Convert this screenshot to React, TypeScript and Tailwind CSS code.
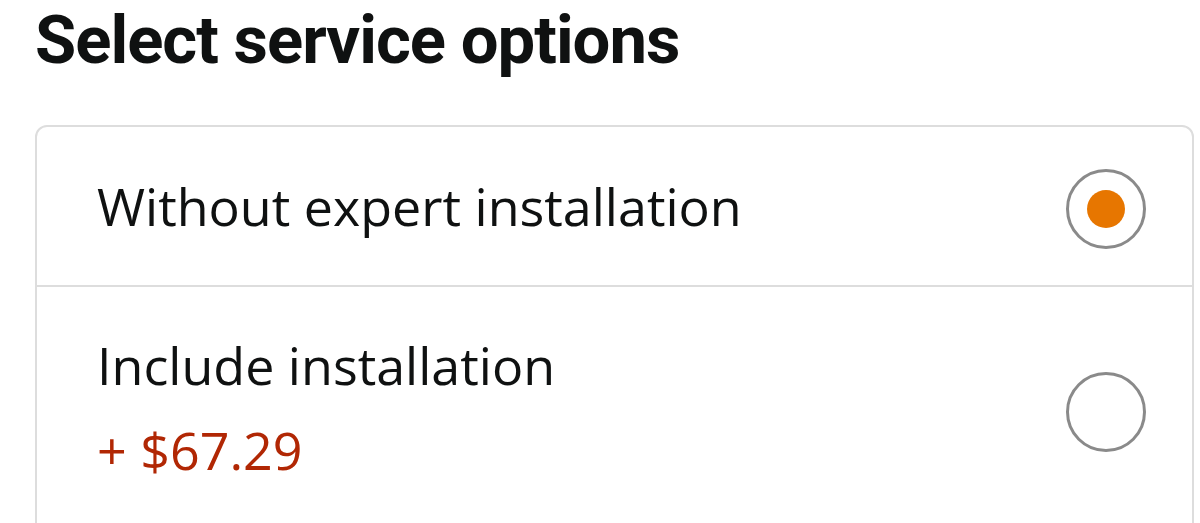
import React, { useState } from 'react';

const options = [
  { id: 'none', label: 'Without expert installation' },
  { id: 'install', label: 'Include installation', price: '+ $67.29' },
];

function Radio({ checked }: { checked: boolean }) {
  return (
    <div className="w-[80px] h-[80px] rounded-full border-[3px] border-[#8a8a8a] bg-white flex items-center justify-center shrink-0">
      {checked && <div className="w-[38px] h-[38px] rounded-full bg-[#e77600]" />}
    </div>
  );
}

export default function App() {
  const [selected, setSelected] = useState('none');

  return (
    <div className="bg-white pl-[35px] pr-[6px] font-['Open_Sans',sans-serif] text-[#0f1111] overflow-hidden h-[523px]">
      {/* Heading */}
      <h1 className="font-['Roboto',sans-serif] text-[67px] font-bold leading-[80px] h-[125px] tracking-[-1px]">
        Select service options
      </h1>

      {/* Options card */}
      <div className="border-2 border-[#dddddd] rounded-[12px] bg-white">
        {options.map((opt, i) => (
          <div
            key={opt.id}
            onClick={() => setSelected(opt.id)}
            className={`flex justify-between pl-[60px] pr-[46px] cursor-pointer ${
              i === 0 ? 'h-[160px] items-center border-b-2 border-[#dddddd]' : 'h-[250px] items-start pt-[46px]'
            }`}
          >
            <div>
              <div className="text-[52px] leading-[64px]">{opt.label}</div>
              {opt.price && (
                <div className="text-[52px] leading-[64px] mt-[21px] text-[#b12704]">{opt.price}</div>
              )}
            </div>
            <div className={i === 1 ? 'mt-[39px]' : 'mt-[6px]'}>
              <Radio checked={selected === opt.id} />
            </div>
          </div>
        ))}
      </div>
    </div>
  );
}
